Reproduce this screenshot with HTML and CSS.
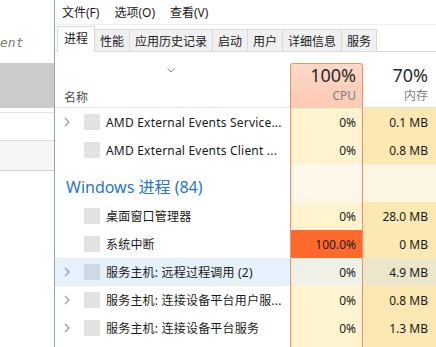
FILE: index.html
```html
<!DOCTYPE html>
<html lang="zh-CN">
<head>
    <meta charset="UTF-8">
    <meta name="viewport" content="width=device-width, initial-scale=1.0">
    <title>任务管理器</title>
    <link rel="stylesheet" href="styles.css">
</head>
<body>
    <!-- editor window behind, only its right edge shows -->
    <div class="editor">
        <div class="code">ent</div>
        <div class="shade"></div>
        <div class="panel">
            <div class="panel-item"></div>
            <div class="panel-item alt"></div>
        </div>
    </div>

    <div class="taskmgr">
        <div class="menubar">
            <span>文件(F)</span>
            <span>选项(O)</span>
            <span>查看(V)</span>
        </div>

        <div class="tabs">
            <div class="tab active">进程</div>
            <div class="tab">性能</div>
            <div class="tab">应用历史记录</div>
            <div class="tab">启动</div>
            <div class="tab">用户</div>
            <div class="tab">详细信息</div>
            <div class="tab">服务</div>
        </div>

        <div class="table">
            <div class="row head">
                <div class="name">
                    <svg class="sort" width="8" height="5" viewBox="0 0 8 5"><polyline points="0.5,0.5 4,4 7.5,0.5" fill="none" stroke="#8a8a8a" stroke-width="1"/></svg>
                    <span class="label">名称</span>
                </div>
                <div class="cpu">
                    <span class="pct">100%</span>
                    <span class="cap">CPU</span>
                </div>
                <div class="mem">
                    <span class="pct">70%</span>
                    <span class="cap">内存</span>
                </div>
            </div>

            <div class="row">
                <div class="name">
                    <svg class="arrow" width="7" height="10" viewBox="0 0 7 10"><polyline points="1,1 5,5 1,9" fill="none" stroke="#9a9a9a" stroke-width="1.2"/></svg>
                    <span class="icon"></span>
                    <span class="text">AMD External Events Service...</span>
                </div>
                <div class="cpu">0%</div>
                <div class="mem">0.1 MB</div>
            </div>

            <div class="row">
                <div class="name">
                    <span class="arrow"></span>
                    <span class="icon"></span>
                    <span class="text">AMD External Events Client ...</span>
                </div>
                <div class="cpu">0%</div>
                <div class="mem">0.8 MB</div>
            </div>

            <div class="row group">
                <div class="name">Windows 进程 (84)</div>
                <div class="cpu"></div>
                <div class="mem"></div>
            </div>

            <div class="row">
                <div class="name">
                    <span class="arrow"></span>
                    <span class="icon"></span>
                    <span class="text">桌面窗口管理器</span>
                </div>
                <div class="cpu">0%</div>
                <div class="mem">28.0 MB</div>
            </div>

            <div class="row">
                <div class="name">
                    <span class="arrow"></span>
                    <span class="icon"></span>
                    <span class="text">系统中断</span>
                </div>
                <div class="cpu hot">100.0%</div>
                <div class="mem">0 MB</div>
            </div>

            <div class="row selected">
                <div class="name">
                    <svg class="arrow" width="7" height="10" viewBox="0 0 7 10"><polyline points="1,1 5,5 1,9" fill="none" stroke="#9a9a9a" stroke-width="1.2"/></svg>
                    <span class="icon"></span>
                    <span class="text">服务主机: 远程过程调用 (2)</span>
                </div>
                <div class="cpu">0%</div>
                <div class="mem">4.9 MB</div>
            </div>

            <div class="row">
                <div class="name">
                    <svg class="arrow" width="7" height="10" viewBox="0 0 7 10"><polyline points="1,1 5,5 1,9" fill="none" stroke="#9a9a9a" stroke-width="1.2"/></svg>
                    <span class="icon"></span>
                    <span class="text">服务主机: 连接设备平台用户服...</span>
                </div>
                <div class="cpu">0%</div>
                <div class="mem">0.8 MB</div>
            </div>

            <div class="row">
                <div class="name">
                    <svg class="arrow" width="7" height="10" viewBox="0 0 7 10"><polyline points="1,1 5,5 1,9" fill="none" stroke="#9a9a9a" stroke-width="1.2"/></svg>
                    <span class="icon"></span>
                    <span class="text">服务主机: 连接设备平台服务</span>
                </div>
                <div class="cpu">0%</div>
                <div class="mem">1.3 MB</div>
            </div>

            <div class="row filler">
                <div class="name"></div>
                <div class="cpu"></div>
                <div class="mem"></div>
            </div>
        </div>
    </div>
</body>
</html>
```

FILE: styles.css
```css
* {
    box-sizing: border-box;
}
body {
    margin: 0;
    display: flex;
    height: 347px;
    overflow: hidden;
    background: #fff;
    font-family: "Noto Sans", "Noto Sans CJK SC", sans-serif;
    font-size: 12px;
    color: #1a1a1a;
}

/* editor behind */
.editor {
    width: 55px;
    flex: none;
    border-right: 1px solid #8ea3bc;
}
.code {
    padding-top: 36px;
    height: 63px;
    font: italic 13px/14px "DejaVu Sans Mono", monospace;
    color: #7c7c7c;
}
.shade {
    height: 45px;
    background: #cbcbcb;
}
.panel {
    padding-top: 4px;
}
.panel-item {
    height: 28px;
    border-top: 1px solid #e4e4e4;
}
.panel-item.alt {
    height: 31px;
    background: #f6f6f6;
    border-top: 1px solid #dadada;
    border-bottom: 1px solid #cfcfcf;
}

/* task manager */
.taskmgr {
    flex: 1;
    min-width: 0;
    display: flex;
    flex-direction: column;
}
.menubar {
    height: 25px;
    flex: none;
    padding-left: 7px;
    display: flex;
    align-items: center;
    gap: 15px;
    border-bottom: 1px solid #efefef;
}
.tabs {
    height: 27px;
    flex: none;
    padding-left: 2px;
    display: flex;
    align-items: flex-end;
    border-bottom: 1px solid #d9d9d9;
}
.tab {
    height: 22px;
    padding: 0 5px;
    margin-left: -1px;
    display: flex;
    align-items: center;
    background: #f0f0f0;
    border: 1px solid #d9d9d9;
    border-bottom: none;
}
.tab.active {
    height: 26px;
    margin-left: 0;
    margin-bottom: -1px;
    padding: 0 6px 3px;
    background: #fff;
    position: relative;
    z-index: 1;
}

.table {
    flex: 1;
    min-height: 0;
    display: flex;
    flex-direction: column;
}
.row {
    display: grid;
    grid-template-columns: 235px 73px 73px;
    height: 28px;
    flex: none;
}
.row.filler {
    flex: 1;
    height: auto;
}
.row > div {
    display: flex;
    align-items: center;
    white-space: nowrap;
    overflow: hidden;
}
.name {
    padding-left: 9px;
}
.name .text {
    letter-spacing: 0.2px;
}
.cpu {
    justify-content: flex-end;
    padding-right: 6px;
    background: #fff4cf;
    border-left: 1px solid #e8956c;
    border-right: 1px solid #e8956c;
}
.mem {
    justify-content: flex-end;
    padding-right: 8px;
    background: #fbe8b2;
}

.row.head {
    height: 56px;
}
.head .name {
    flex-direction: column;
    align-items: flex-start;
    border-bottom: 1px solid #e3e3e3;
}
.head .sort {
    margin: 16px 0 0 103px;
}
.head .label {
    margin-top: 15px;
    color: #4c4c4c;
}
.head .cpu, .head .mem {
    flex-direction: column;
    align-items: flex-end;
    justify-content: flex-start;
}
.head .cpu {
    margin-top: 11px;
    background: linear-gradient(#fdd9c7, #fcc9b2);
    border-top: 1px solid #e8956c;
    border-radius: 3px 3px 0 0;
}
.head .mem {
    padding-top: 12px;
    background: #fff;
    border-bottom: 1px solid #e3e3e3;
}
.pct {
    font-size: 18px;
    line-height: 22px;
    color: #2a2a2a;
}
.cap {
    margin-top: 2px;
    line-height: 16px;
    color: #7f7f7f;
}

.arrow {
    width: 7px;
    height: 10px;
    flex: none;
    margin-right: 13px;
}
.icon {
    width: 16px;
    height: 16px;
    flex: none;
    margin-right: 6px;
    background: #e2e2e2;
}
.text {
    overflow: hidden;
}

.row.group {
    height: 38px;
}
.group .name {
    padding: 5px 0 0 11px;
    font-size: 16px;
    color: #2b74c7;
}
.group .cpu {
    background: #fff8ea;
}
.group .mem {
    background: #fef6e4;
}

.cpu.hot {
    background: #fe6a2c;
}

.selected .name {
    background: #e5f1fb;
}
.selected .icon {
    background: #cfd9e4;
}
.selected .cpu {
    background: #eff1e6;
}
.selected .mem {
    background: #ece7ca;
}
```
